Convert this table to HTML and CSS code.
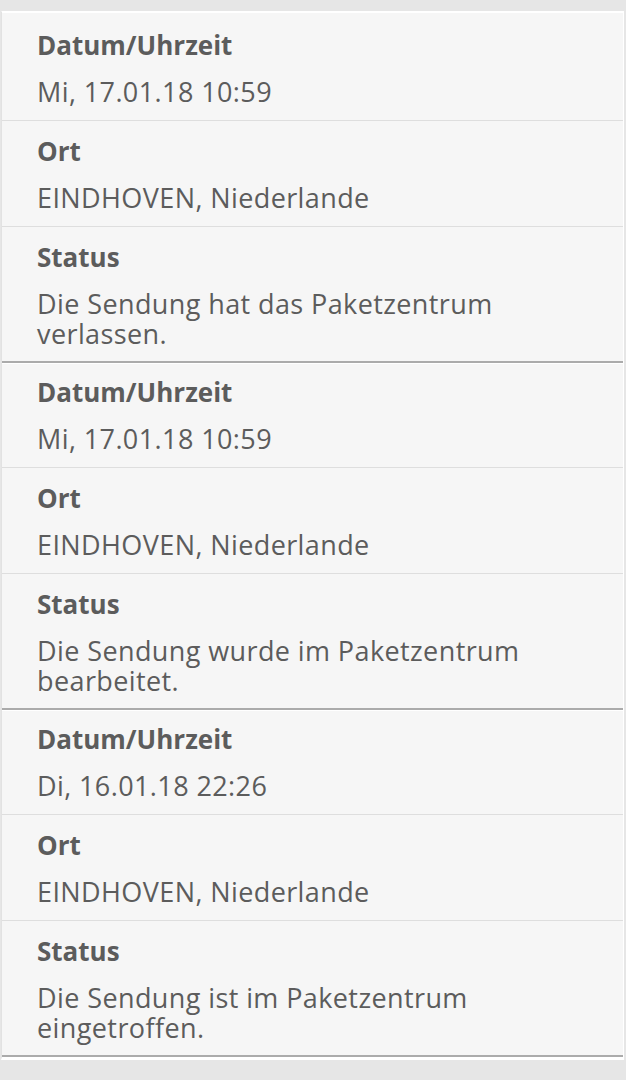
FILE: index.html
```html
<!DOCTYPE html>
<html lang="de">
<head>
<meta charset="utf-8">
<link rel="stylesheet" href="styles.css">
</head>
<body>
<div class="panel">
  <section class="group">
    <div class="item"><div class="label">Datum/Uhrzeit</div><div class="value">Mi, 17.01.18 10:59</div></div>
    <div class="item"><div class="label">Ort</div><div class="value">EINDHOVEN, Niederlande</div></div>
    <div class="item"><div class="label">Status</div><div class="value">Die Sendung hat das Paketzentrum verlassen.</div></div>
  </section>
  <section class="group">
    <div class="item"><div class="label">Datum/Uhrzeit</div><div class="value">Mi, 17.01.18 10:59</div></div>
    <div class="item"><div class="label">Ort</div><div class="value">EINDHOVEN, Niederlande</div></div>
    <div class="item"><div class="label">Status</div><div class="value">Die Sendung wurde im Paketzentrum bearbeitet.</div></div>
  </section>
  <section class="group">
    <div class="item"><div class="label">Datum/Uhrzeit</div><div class="value">Di, 16.01.18 22:26</div></div>
    <div class="item"><div class="label">Ort</div><div class="value">EINDHOVEN, Niederlande</div></div>
    <div class="item"><div class="label">Status</div><div class="value">Die Sendung ist im Paketzentrum eingetroffen.</div></div>
  </section>
</div>
</body>
</html>
```
FILE: styles.css
```css
html, body {
  margin: 0;
  padding: 0;
  background: #e6e6e6;
}
body {
  padding-top: 11px;
  height: 1080px;
  box-sizing: border-box;
  font-family: "Open Sans", "Noto Sans", sans-serif;
  color: #5c5c5c;
}
.panel {
  margin: 0 2px 0 1px;
  background: #f6f6f6;
  border-top: 1px solid #ffffff;
  border-left: 1px solid #e2e2e2;
  border-right: 1px solid #ffffff;
  border-bottom: 3px solid #ffffff;
}
.group {
  display: flex;
  flex-direction: column;
  border-bottom: 2px solid #ababab;
}
.item {
  display: flex;
  flex-direction: column;
  gap: 17px;
  padding: 15px 60px 13px 35px;
  border-top: 1px solid #ffffff;
}
.item + .item {
  box-shadow: inset 0 1px 0 #dedede;
  border-top: none;
  padding-top: 16px;
}
.item:last-child {
  padding-bottom: 12px;
}
.group:first-child .item:first-child {
  padding-top: 17px;
}
.group + .group .item:first-child {
  padding-top: 13px;
}
.label {
  font-size: 26px;
  line-height: 30px;
  font-weight: 700;
}
.value {
  font-size: 27px;
  line-height: 30px;
  font-weight: 400;
  letter-spacing: 0.4px;
}
```
